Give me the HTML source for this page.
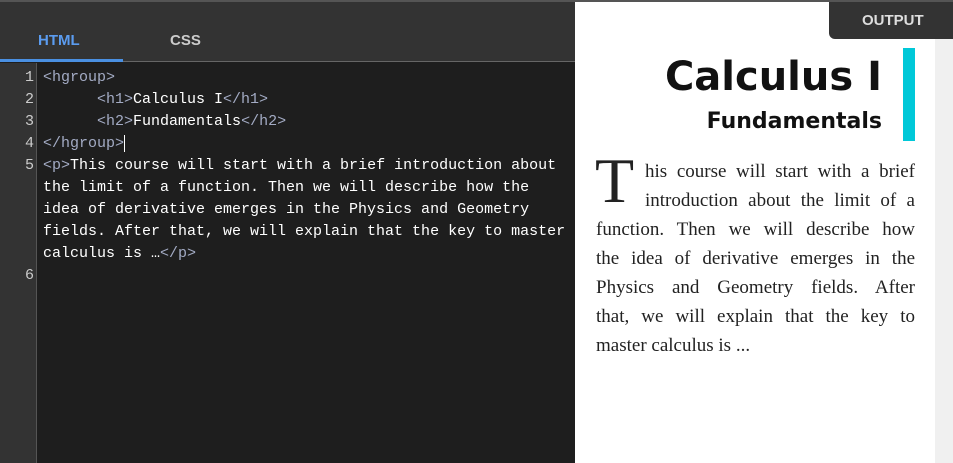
<!DOCTYPE html>
<html><head><style>
*{margin:0;padding:0;box-sizing:border-box}
body{width:953px;height:463px;overflow:hidden;background:#fff;position:relative;font-family:"Liberation Sans",sans-serif}
#top{position:absolute;left:0;top:0;width:953px;height:2px;background:#555}
#left{position:absolute;left:0;top:2px;width:575px;height:461px;background:#1e1e1e}
#hdr{position:absolute;left:0;top:0;width:575px;height:60px;background:#333;border-bottom:1px solid #666}
.tab{position:absolute;top:30px;font-weight:bold;font-size:15px;color:#ccc}
#ul{position:absolute;left:0;top:57px;width:123px;height:3px;background:#4a90e2}
#gut{position:absolute;left:0;top:61px;width:37px;height:400px;background:#333;border-right:1px solid #555}
.ln{position:absolute;left:0;width:34px;text-align:right;color:#ccc;font:15px/22px "Liberation Mono",monospace}
#code{position:absolute;left:43px;top:65px;font:15px/22px "Liberation Mono",monospace;color:#fff;white-space:pre}
.t{color:#a3abc4}
#right{position:absolute;left:575px;top:2px;width:360px;height:461px;background:#fff}
#sb{position:absolute;left:935px;top:2px;width:18px;height:461px;background:#f0f0f0}
#out{position:absolute;left:829px;top:2px;width:124px;height:37px;background:#333;border-bottom-left-radius:6px;color:#ddd;font-weight:bold;font-size:15px;padding:10px 0 0 33px}
h1{position:absolute;right:71px;top:54px;font:bold 40px "DejaVu Sans",sans-serif;color:#111}
h2{position:absolute;right:71px;top:109px;font:bold 22px "DejaVu Sans",sans-serif;color:#111}
#bar{position:absolute;left:903px;top:48px;width:12px;height:93px;background:#00c8d8}
#p{position:absolute;left:596px;top:157px;width:319px;font:19px/29px "Liberation Serif",serif;color:#222}
#p div{text-align:justify;text-align-last:justify;white-space:nowrap}
#p div.l{text-align-last:left}
#cap{position:absolute;left:595px;top:150px;font:64px/62px "Liberation Serif",serif;color:#222}
</style></head><body>
<div id="top"></div>
<div id="left">
<div id="hdr"><div class="tab" style="left:38px;color:#5b9cf0">HTML</div><div class="tab" style="left:170px">CSS</div><div id="ul"></div></div>
<div id="gut">
<div class="ln" style="top:4px">1</div><div class="ln" style="top:26px">2</div><div class="ln" style="top:48px">3</div><div class="ln" style="top:70px">4</div><div class="ln" style="top:92px">5</div><div class="ln" style="top:202px">6</div>
</div>
<div id="code"><span class="t">&lt;hgroup&gt;</span>
      <span class="t">&lt;h1&gt;</span>Calculus I<span class="t">&lt;/h1&gt;</span>
      <span class="t">&lt;h2&gt;</span>Fundamentals<span class="t">&lt;/h2&gt;</span>
<span class="t">&lt;/hgroup&gt;</span><span style="border-left:1px solid #fff"></span>
<span class="t">&lt;p&gt;</span>This course will start with a brief introduction about
the limit of a function. Then we will describe how the
idea of derivative emerges in the Physics and Geometry
fields. After that, we will explain that the key to master
calculus is …<span class="t">&lt;/p&gt;</span></div>
</div>
<div id="right"></div>
<div id="sb"></div>
<div id="out">OUTPUT</div>
<h1>Calculus I</h1>
<h2>Fundamentals</h2>
<div id="bar"></div>
<div id="cap">T</div>
<div id="p">
<div style="margin-left:49px">his course will start with a brief</div>
<div style="margin-left:49px">introduction about the limit of a</div>
<div>function. Then we will describe how</div>
<div>the idea of derivative emerges in the</div>
<div>Physics and Geometry fields. After</div>
<div>that, we will explain that the key to</div>
<div class="l">master calculus is ...</div>
</div>
</body></html>
